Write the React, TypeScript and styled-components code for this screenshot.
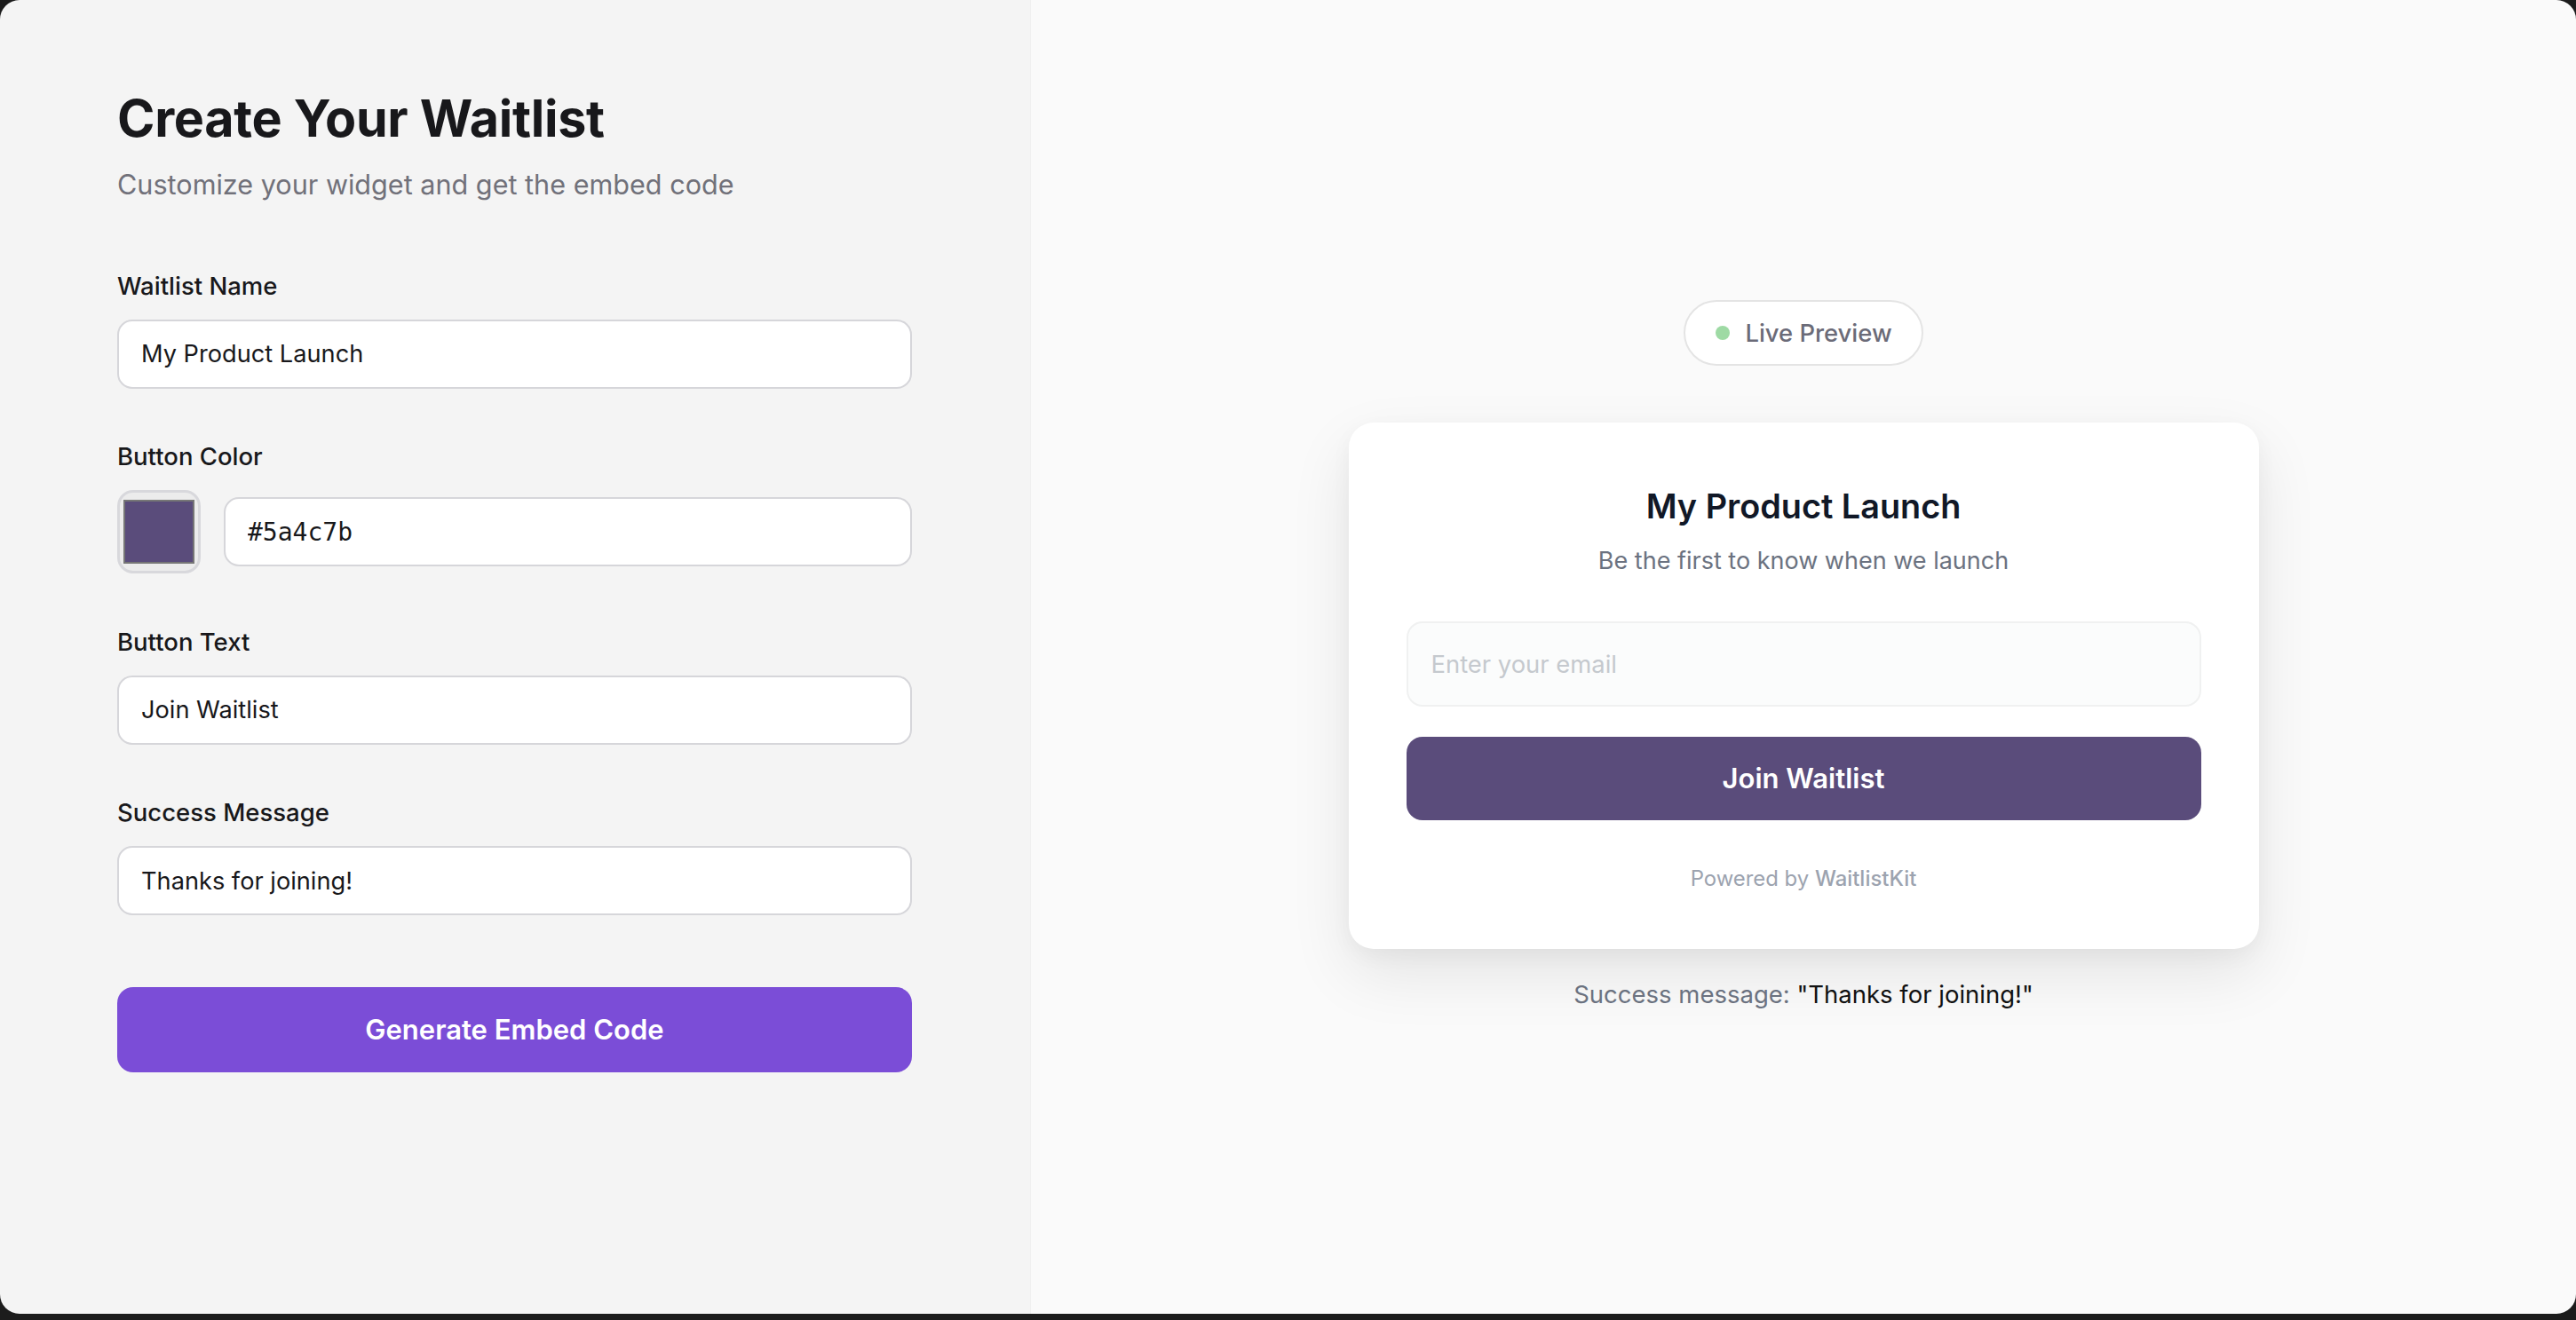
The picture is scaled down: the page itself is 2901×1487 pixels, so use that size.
import React from "react";
import styled, { createGlobalStyle } from "styled-components";

const GlobalStyle = createGlobalStyle`
  html, body {
    margin: 0;
    padding: 0;
    background: #1c1c1c;
  }
  body {
    font-family: Inter, "Noto Sans", "Liberation Sans", sans-serif;
    -webkit-font-smoothing: antialiased;
  }
  * {
    box-sizing: border-box;
  }
`

const Window = styled.div`
  width: 100%;
  height: 1480px;
  border-radius: 22px;
  overflow: hidden;
  display: flex;
  flex-direction: row;
`

const EditorPanel = styled.div`
  width: 1160px;
  flex-shrink: 0;
  background-color: #f4f4f4;
  padding: 99px 133px 0 132px;
  display: flex;
  flex-direction: column;
`

const Title = styled.h1`
  margin: 0;
  font-size: 57.4px;
  line-height: 1.2;
  font-weight: 700;
  color: #18181b;
  letter-spacing: -0.3px;
`

const Subtitle = styled.p`
  margin: 17px 0 71px 0;
  font-size: 30.6px;
  line-height: 1.5;
  color: #71717a;
`

const Field = styled.div`
  display: flex;
  flex-direction: column;
  margin-bottom: 56.5px;
`

const Label = styled.label`
  font-size: 27.5px;
  line-height: 40px;
  font-weight: 500;
  color: #18181b;
  margin-bottom: 18px;
`

const TextInput = styled.input<{ $mono?: boolean }>`
  width: 100%;
  height: 78px;
  padding: 0 25px;
  border: 2px solid #d6d6da;
  border-radius: 17px;
  background: #ffffff;
  font-family: ${p => p.$mono ? '"DejaVu Sans Mono", "Liberation Mono", monospace' : 'Inter, "Noto Sans", sans-serif'};
  font-size: ${p => p.$mono ? '28px' : '27.2px'};
  color: #18181b;
  outline: none;
`

const ColorRow = styled.div`
  display: flex;
  align-items: center;
  gap: 26px;
`

const SwatchFrame = styled.div`
  width: 94px;
  height: 94px;
  flex-shrink: 0;
  border: 3px solid #d8d8dc;
  border-radius: 18px;
  background: #ececec;
  display: flex;
  align-items: center;
  justify-content: center;
`

const Swatch = styled.div<{ $color: string }>`
  width: 80px;
  height: 72px;
  background: ${p => p.$color};
  border: 2px solid #767676;
`

const PrimaryButton = styled.button`
  margin-top: 24px;
  width: 100%;
  height: 96px;
  border: none;
  border-radius: 18px;
  background: #7b4dd7;
  color: #ffffff;
  font-family: Inter, "Noto Sans", sans-serif;
  font-size: 31px;
  font-weight: 600;
`

const PreviewPanel = styled.div`
  flex: 1;
  background-color: #fafafa;
  border-left: 1px solid #f0f0f0;
  display: flex;
  flex-direction: column;
  align-items: center;
  justify-content: center;
`

const LiveBadge = styled.div`
  height: 74px;
  padding: 0 33px 0 34px;
  border: 2px solid #e4e4e4;
  border-radius: 40px;
  background: #ffffff;
  display: flex;
  align-items: center;
  gap: 17px;
  font-size: 27.4px;
  font-weight: 500;
  color: #6b6b78;
`

const Dot = styled.span`
  width: 16px;
  height: 16px;
  border-radius: 50%;
  background: #9edaa4;
`

const Card = styled.div`
  margin-top: 64px;
  width: 1025px;
  padding: 66px 65px 62px 65px;
  background: #ffffff;
  border-radius: 28px;
  box-shadow: 0 28px 70px rgba(0, 0, 0, 0.09), 0 8px 24px rgba(0, 0, 0, 0.04);
  display: flex;
  flex-direction: column;
  align-items: center;
`

const CardTitle = styled.h2`
  margin: 0;
  font-size: 37.8px;
  line-height: 1.5;
  font-weight: 600;
  color: #111827;
`

const CardSubtitle = styled.p`
  margin: 13px 0 47px 0;
  font-size: 27px;
  line-height: 1.5;
  color: #6b7280;
`

const EmailInput = styled.input`
  width: 100%;
  height: 96px;
  padding: 0 26px;
  border: 2px solid #f0f1f1;
  border-radius: 18px;
  background: #fbfcfc;
  font-family: Inter, "Noto Sans", sans-serif;
  font-size: 27.4px;
  color: #111827;
  outline: none;

  &::placeholder {
    color: #c5c9ce;
  }
`

const JoinButton = styled.button<{ $color: string }>`
  margin-top: 34px;
  width: 100%;
  height: 94px;
  border: none;
  border-radius: 18px;
  background: ${p => p.$color};
  color: #ffffff;
  font-family: Inter, "Noto Sans", sans-serif;
  font-size: 31px;
  font-weight: 600;
`

const Powered = styled.div`
  margin-top: 48px;
  font-size: 23.9px;
  line-height: 1.5;
  color: #9ca3af;
`

const Brand = styled.span`
  font-weight: 500;
`

const SuccessLine = styled.div`
  margin-top: 31px;
  font-size: 27.5px;
  line-height: 1.5;
  color: #6b7280;
`

const SuccessValue = styled.span`
  color: #111111;
`

export default function App() {
    const color = "#5a4c7b"
    const name = "My Product Launch"
    const buttonText = "Join Waitlist"
    const success = "Thanks for joining!"

    return (
        <>
            <GlobalStyle/>
            <Window>
                <EditorPanel>
                    <Title>Create Your Waitlist</Title>
                    <Subtitle>Customize your widget and get the embed code</Subtitle>

                    <Field>
                        <Label>Waitlist Name</Label>
                        <TextInput defaultValue={name}/>
                    </Field>

                    <Field>
                        <Label>Button Color</Label>
                        <ColorRow>
                            <SwatchFrame><Swatch $color={color}/></SwatchFrame>
                            <TextInput $mono defaultValue={color}/>
                        </ColorRow>
                    </Field>

                    <Field>
                        <Label>Button Text</Label>
                        <TextInput defaultValue={buttonText}/>
                    </Field>

                    <Field>
                        <Label>Success Message</Label>
                        <TextInput defaultValue={success}/>
                    </Field>

                    <PrimaryButton>Generate Embed Code</PrimaryButton>
                </EditorPanel>

                <PreviewPanel>
                    <LiveBadge><Dot/>Live Preview</LiveBadge>
                    <Card>
                        <CardTitle>{name}</CardTitle>
                        <CardSubtitle>Be the first to know when we launch</CardSubtitle>
                        <EmailInput placeholder="Enter your email"/>
                        <JoinButton $color={color}>{buttonText}</JoinButton>
                        <Powered>Powered by <Brand>WaitlistKit</Brand></Powered>
                    </Card>
                    <SuccessLine>Success message: <SuccessValue>"{success}"</SuccessValue></SuccessLine>
                </PreviewPanel>
            </Window>
        </>
    )
}
